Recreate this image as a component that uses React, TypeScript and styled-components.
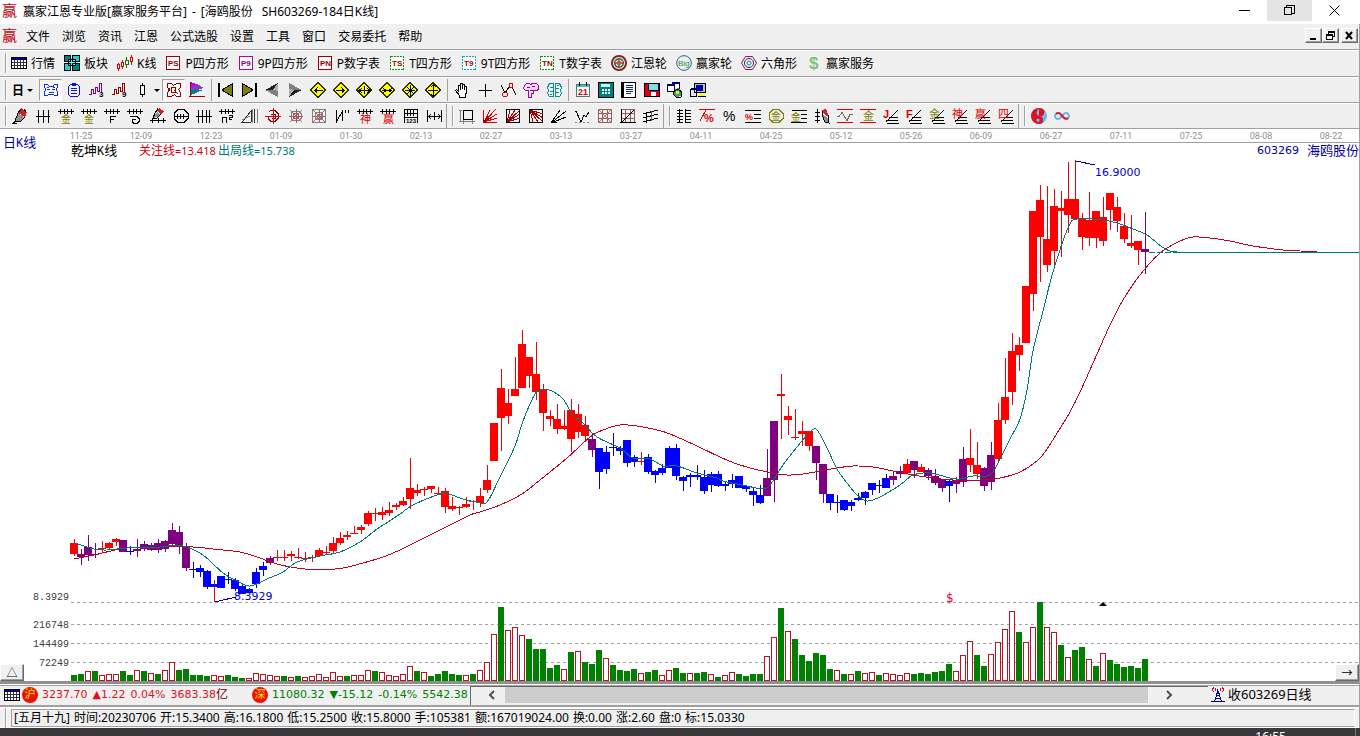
import React from "react";
import styled, { createGlobalStyle, css } from "styled-components";

const UI = `"Noto Sans", "Noto Sans CJK SC", sans-serif`;
const NUM = `"DejaVu Sans", "Noto Sans CJK SC", sans-serif`;

const Global = createGlobalStyle`
  * { box-sizing: border-box; }
  body { margin: 0; background: #3b383b; font-family: ${UI}; font-size: 12px; color: #000; overflow: hidden; }
  button { font: inherit; color: inherit; }
`;

/* ---------- frame ---------- */
const Shell = styled.div`
  display: flex;
  flex-direction: column;
  min-height: 100vh;
  background: #fff;
`;
const TitleBar = styled.header`
  display: flex;
  align-items: center;
  height: 24px;
  padding: 0 0 2px 2px;
  gap: 5px;
  background: #fff;
`;
const Title = styled.h1`
  display: flex;
  align-items: center;
  gap: 5px;
  margin: 0;
  flex: 1;
  font-size: 12px;
  font-weight: 400;
  white-space: nowrap;
`;
const Code = styled.span`
  margin-left: 4px;
`;
const WindowButtons = styled.div`
  display: flex;
  align-self: flex-start;
  margin-right: 3px;
`;
const WindowButton = styled.button<{ $hot?: boolean }>`
  width: 45px;
  height: 21px;
  padding: 0;
  border: 0;
  display: grid;
  place-items: center;
  background: ${(p) => (p.$hot ? "#e5e5e5" : "transparent")};
`;
const Body = styled.div`
  display: flex;
  flex-direction: column;
  flex: 1;
  border-right: 1px solid #a0a0a0;
`;
const MenuBar = styled.nav`
  display: flex;
  align-items: center;
  height: 26px;
  padding: 0 1px 2px 2px;
  background: #f0f0f0;
  border-bottom: 1px solid #a0a0a0;
`;
const MenuItem = styled.button`
  border: 0;
  padding: 0;
  margin-left: 12px;
  background: none;
  white-space: nowrap;
  &:first-of-type { margin-left: 8px; }
`;
const ChildButtons = styled.div`
  display: flex;
  margin-left: auto;
`;
const Raised = css`
  background: #f0f0f0;
  border: 1px solid;
  border-color: #fff #696969 #696969 #fff;
  box-shadow: inset -1px -1px 0 #a0a0a0;
  padding: 0;
  display: grid;
  place-items: center;
`;
const ChildButton = styled.button<{ $apart?: boolean }>`
  ${Raised}
  width: 17px;
  height: 15px;
  margin-left: ${(p) => (p.$apart ? "2px" : "0")};
`;

/* ---------- tool bars ---------- */
const ToolRow = styled.div<{ $tall?: boolean }>`
  display: flex;
  height: ${(p) => (p.$tall ? "27px" : "26px")};
  padding-bottom: ${(p) => (p.$tall ? "2px" : "0")};
  background: #f0f0f0;
  border-top: 1px solid #fff;
  border-bottom: 1px solid #a0a0a0;
`;
const Band = styled.div<{ $closed?: boolean }>`
  display: flex;
  align-items: center;
  padding: 0 1px 0 5px;
  border-right: ${(p) => (p.$closed ? "1px solid #a0a0a0" : "0")};
`;
const Grip = styled.span`
  width: 2px;
  height: 20px;
  margin-right: 1px;
  background: #fff;
  border-left: 1px solid #a0a0a0;
`;
const Labelled = styled.button`
  display: flex;
  align-items: center;
  gap: 4px;
  border: 0;
  padding: 0;
  margin: 0 6px 0 3px;
  background: none;
  white-space: nowrap;
`;
const Tool = styled.button<{ $pressed?: boolean; $menu?: boolean }>`
  display: flex;
  align-items: center;
  gap: 6px;
  width: ${(p) => (p.$menu ? "31px" : "23px")};
  height: 22px;
  padding: 0 0 0 3px;
  font-weight: 700;
  border: 1px solid;
  border-color: ${(p) => (p.$pressed ? "#a0a0a0 #fff #fff #a0a0a0" : "transparent")};
  background: ${(p) => (p.$pressed ? "#f8f8f8" : "none")};
`;
const Caret = styled.span`
  border: 3px solid transparent;
  border-top-color: #000;
  border-bottom: 0;
  margin-left: -3px;
`;
const Divider = styled.span`
  width: 1px;
  height: 22px;
  margin: 0 2px 0 3px;
  background: #a0a0a0;
`;
const IconSvg = styled.svg`
  flex: none;
  overflow: visible;
`;

/* ---------- chart ---------- */
const ChartPane = styled.main`
  position: relative;
  flex: 1;
  min-height: 552px;
  background: #fff;
`;
const ChartSvg = styled.svg`
  display: block;
  width: 100%;
  height: 552px;
`;
const CornerButton = styled.button<{ $right?: boolean }>`
  ${Raised}
  position: absolute;
  bottom: 0;
  ${(p) => (p.$right ? "right: 0;" : "left: 0;")}
  width: 24px;
  height: 17px;
  font-size: 11px;
  line-height: 12px;
`;
const StockName = styled.div`
  position: absolute;
  top: 14px;
  right: 0;
  display: flex;
  gap: 8px;
  align-items: center;
  color: #0000a0;
  font-family: ${NUM};
  font-size: 11px;
  line-height: 16px;
`;
const NameText = styled.span`
  font-size: 13px;
`;

/* ---------- bottom bars ---------- */
const QuoteBar = styled.section`
  display: flex;
  align-items: center;
  height: 26px;
  background: #f0f0f0;
  border-top: 3px solid #909090;
  border-bottom: 2px solid #a0a0a0;
  box-shadow: inset 0 1px 0 #fff, inset 0 2px 0 #a0a0a0;
  font-family: ${NUM};
  font-size: 11px;
`;
const Quotes = styled.div`
  display: flex;
  align-items: center;
  flex: 0 1 470px;
  min-width: 0;
  padding-left: 4px;
  gap: 2px;
  overflow: hidden;
  white-space: nowrap;
`;
const Quote = styled.span<{ $up?: boolean }>`
  display: flex;
  align-items: center;
  gap: 5px;
  flex: none;
  margin-right: ${(p) => (p.$up ? "22px" : "0")};
  color: ${(p) => (p.$up ? "#e01020" : "#008000")};
`;
const Exchange = styled.b`
  display: grid;
  place-items: center;
  width: 16px;
  height: 16px;
  margin-right: -1px;
  border-radius: 8px;
  background: #f01000;
  color: #ffe000;
  font-size: 11px;
  font-weight: 400;
  line-height: 16px;
`;
const Turnover = styled.span`
  display: flex;
  align-items: center;
`;
const Unit = styled.span`
  color: #600000;
  font-size: 12px;
  line-height: 16px;
`;
const Scroller = styled.div`
  display: flex;
  flex: 1;
  align-self: stretch;
  margin-top: 2px;
  border-top: 1px solid #696969;
  border-left: 1px solid #696969;
`;
const ScrollButton = styled.button<{ $wide?: boolean }>`
  width: ${(p) => (p.$wide ? "60px" : "34px")};
  padding: 0 ${(p) => (p.$wide ? "26px" : "0")} 2px 8px;
  border: 0;
  background: #f0f0f0;
  display: grid;
  place-items: center;
`;
const Thumb = styled.div`
  flex: 1;
  margin-bottom: 2px;
  background: #cdcdcd;
`;
const Receiver = styled.div`
  display: flex;
  align-items: center;
  gap: 2px;
  width: 151px;
  padding: 0 0 1px 2px;
  font-family: ${UI};
  font-size: 13px;
  line-height: 16px;
`;
const InfoBar = styled.footer`
  display: flex;
  align-items: center;
  height: 21px;
  padding-left: 5px;
  gap: 3px;
  background: #f0f0f0;
  border-top: 2px solid #fff;
  border-bottom: 1px solid #fff;
`;
const InfoText = styled.div`
  display: flex;
  gap: 4px;
  margin: 0 4px 0 0;
  flex: 1;
  padding-left: 2px;
  border: 1px solid #a0a0a0;
  border-right-color: #fff;
  line-height: 16px;
  white-space: nowrap;
`;
const TaskBar = styled.div`
  display: flex;
  justify-content: flex-end;
  height: 8px;
  padding-right: 4px;
  background: #3b383b;
  color: #fff;
  overflow: hidden;
`;
const Clock = styled.span`
  padding: 1px 69px 0 0;
  border-right: 1px solid #777;
  line-height: 16px;
`;

/* ---------- icons ---------- */
type Layer = [string, string];
type Glyph = [string, number, number, string, number, string?];
type IconDef = { f?: Layer[]; s?: Layer[]; t?: Glyph; dash?: string; smooth?: boolean; w?: number };

const K = "#000";
const R = "#e00000";
const D = "#a00000";
const G = "#808000";
const comb = "M0 3.5h16M2.5 1v5M6.5 1v5M9.5 1v5M13.5 1v5";
const diamond = "M8 0L16 8L8 16L0 8z";
const fan = "M4 15.5h12M3 12.5h12M6 9.5h9M3 14L15 2";
const box = "M1.5 1.5h13v13h-13z";
const grid = "M1.5 1.5h13v13h-13zM1 5.5h14M1 10.5h14M5.5 1v14M10.5 1v14";

const boxed = (text: string, edge: string, ink: string, dash?: string): IconDef => ({
  f: [["#fff", box]],
  s: [[edge, box]],
  t: [text, 3, 11, ink, 8, "700"],
  dash,
});
const sign = (arrows: string): IconDef => ({ f: [["#ff0", diamond]], s: [["#303000", "M8 .5L15.5 8L8 15.5L.5 8z"], [K, arrows]] });
const right = (c: string, text: string): IconDef => ({ s: [[K, fan]], t: [text, 0, 10, c, 11, text < "a" ? "700" : "400"] });

const icons: Record<string, IconDef> = {
  win: { t: ["赢", 0, 13, "#c00010", 15] },
  table: {
    f: [["#fff", "M0 2h16v12H0z"], ["#000080", "M0 2h16v3H0z"]],
    s: [["#303040", "M3.5 5v9M6.5 5v9M9.5 5v9M12.5 5v9M0 7.5h16M0 10.5h16"], [K, "M.5 2.5h15v11h-15z"]],
  },
  blocks: {
    f: [["#008080", "M1 1h6v6H1zM9 9h6v6H9z"], ["#20d0d0", "M9 1h6v6H9zM1 9h6v6H1z"], ["#40ffff", "M5 4h6v6H5z"]],
    s: [[K, "M.5 .5h6v6h-6zM8.5 .5h7v6h-7zM.5 8.5h6v7h-6zM8.5 8.5h7v7h-7zM4.5 4.5h7v6h-7z"]],
  },
  kline: {
    f: [["#fff", "M1 9h1v5H1zM5 7h1v4H5zM9 5h2v5H9zM13 3h2v4h-2z"]],
    s: [[R, "M.5 9.5h2v4h-2zM1.5 8v1M1.500 14v2M4.5 7.5h2v4h-2zM5.5 5v2M5.500 12v2M13.5 2.5h2v4h-2zM14.5 0v2M14.500 7v3"], ["#008000", "M8.5 5.5h3v4h-3zM9.5 2v3M9.500 10v3"]],
  },
  ps: boxed("PS", D, D),
  p9: boxed("P9", "#b000b0", "#800080"),
  pn: boxed("PN", D, D),
  ts: boxed("TS", "#00a000", D, "2 1"),
  t9: boxed("T9", "#00b0b0", D, "2 1"),
  tn: boxed("TN", "#00a000", D, "2 1"),
  wheel: {
    smooth: true,
    f: [["#802828", "M8 0a8 8 0 1 0 .01 0z"], ["#f0f0f0", "M8 2a6 6 0 1 0 .01 0z"], ["#207040", "M8 3a5 5 0 1 0 .01 0z"], ["#fff", "M8 4.500a3.500 3.500 0 1 0 .01 0z"]],
    s: [["#b02020", "M8 6a2 2 0 1 0 .01 0zM8 3v10M3 8h10"]],
  },
  big: { smooth: true, s: [["#206090", "M8 .7a7.3 7.3 0 1 0 .01 0z"]], t: ["Big", 2, 11, "#209040", 8, "400"] },
  hex: {
    smooth: true,
    s: [["#a01040", "M4.5 1.5h7L15.5 8l-4 6.5h-7L.5 8z"], ["#2020b0", "M8 3.5a4.5 4.5 0 1 0 .01 0z"], ["#208050", "M8 6a2 2 0 1 0 .01 0z"]],
  },
  dollar: { t: ["$", 3, 14, "#80c080", 17, "700"] },
  mask: { s: [["#1030e0", "M1 2.500h4M11 2.500h4M5.500 3v1M10.500 3v1M6 4.500h5M1.500 3v3M14.500 3v3M2.500 6v3M13.500 6v3M1.500 9v5M14.500 9v5M2 13.500h3M11 13.500h3M5 12.500h6M4 7.500h3M9 7.500h3M5.500 10.500h5M4 5.500h2M10 5.500h2"]] },
  list: { s: [["#1010d0", "M4.5 2.5h7l2 2v8l-2 2h-7l-2-2v-8zM6.5 1.5h3v2h-3zM5 6.5h6M5 8.5h6M5 11.5h6"]] },
  wave3: { s: [["#800080", "M0 12.500h2.500v-5h2v4h2v-6h2v4h2v-8h2v8"]], t: ["3", 10, 15, K, 8, "700"] },
  wave9: { s: [["#900000", "M0 12.500h2.500v-5h2v4h2v-6h2v4h2v-8h2v8"]], t: ["9", 10, 15, K, 8, "700"] },
  candle: { f: [["#fff", "M5 4h5v9H5z"]], s: [[K, "M5.5 3.5h4v9h-4zM7.5 1v3M7.5 13v2"]] },
  gear: { s: [["#900000", "M1.5 1.5h4l2 2 3-2h4v4l-2 2 2 3v4h-4l-2-2-3 2h-4v-4l2-2-2-3zM5.5 5.5h4v5h-4zM8 8l4 4M4 6l-2 4"]] },
  flag: { f: [["#c000e0", "M2 0l6 2.500-6 3z"], ["#8040c0", "M2 5l6-3 7 4-7 2H2z"], ["#008080", "M2 8h12l-12 5z"]], s: [[D, "M1.5 0v15M0 14.5h16"]] },
  first: { f: [[K, "M0 1h2v14H0z"], [G, "M14 2v12L4 8z"]], s: [[K, "M14.5 1.5v13L4 8z"]] },
  last: { f: [[K, "M14 1h2v14h-2z"], [G, "M2 2v12l10-6z"]], s: [[K, "M1.5 1.5v13L12 8z"]] },
  prev: { f: [["#b0b0b0", "M14 1v14L1 8z"], ["#202020", "M14 1L1 8h8z"], ["#808080", "M14 15V9L9 8H1z"]] },
  next: { f: [["#b0b0b0", "M2 1v14l13-7z"], ["#202020", "M2 15L15 8H7z"], ["#808080", "M2 1v6l5 1h8z"]] },
  left: sign("M4 8.5h9M7.5 5.5L4.5 8.5l3 3M5 7.500h2M5 9.500h2"),
  rightd: sign("M3 8.5h9M8.5 5.5l3 3-3 3M9 7.500h2M9 9.500h2"),
  both: sign("M3 8.5h10M8.5 4v8M6 6l-3 2.5 3 2.5M11 6l3 2.5-3 2.5"),
  inward: sign("M3 8.5h10M4 6l3 2.5-3 2.5M13 6l-3 2.5 3 2.5"),
  star: sign("M3 8.5h10M8.5 3v11M5 5l7 7M12 5l-7 7"),
  updown: sign("M3 8.5h10M8.5 2v12M6 5l2.500-2.500L11 5M6 12l2.500 2.500L11 12"),
  hand: { f: [["#fff", "M5 8V3h2v-2h2v2h2v1h2v7l-2 4H6L2 9z"]], s: [[K, "M4.500 10V3.500h2V8M6.500 7V1.500h2V7M8.500 7V2.500h2V8M10.500 4.500h2v6l-1 2v3H5.500v-2l-4-5 1-1 2 2"]] },
  plus: { s: [[K, "M8.500 2v13M2 8.500h13"]] },
  zig: { s: [[K, "M1 3l4 8 4-6M12 5l4 8"], [R, "M3.500 10.500h3l1 1v2l-1 1h-3l-1-1v-2zM9.500 1.500h3v4h-3z"]] },
  mind: { f: [["#f0d8f0", "M2 3h12v4l-3 2H7v-1H4z"]], s: [["#a000a0", "M1.500 3.500l2-2h3l1 1 2-1h4l2 2v4l-2 1h-3v3h-2v4h-3v-7h-3l-2-2zM4 5.500h3M9 4.500h3M7 8.500h4"]] },
  brain: { s: [["#009090", "M3.500 1.500h4v13h-4l-2-3 1-3-1-3zM9.500 1.500h4l2 4-1 3 1 3-2 3h-4zM4 5.500h3M4 9.500h3M10 6.500h3M10 10.500h3M4 12.500h2M11 3.500h2"]] },
  calendar: { f: [["#fff", "M1 4h13v11H1z"], ["#40c0c0", "M1 2h13v3H1z"]], s: [["#408080", "M1.500 2.500h13v12h-13z"], [K, "M4.500 0v4M11.500 0v4"]], t: ["21", 3, 13, R, 9, "700"] },
  calc: { f: [["#008080", "M1 1h14v15H1z"], ["#c0ffff", "M3 2h9v3H3z"], ["#fff", "M4 7h2v2H4zM7 7h2v2H7zM10 7h2v2h-2zM4 10h2v2H4zM7 10h2v2H7zM10 10h2v2h-2z"]], s: [[K, "M.500 .500h15v15H.500z"]] },
  notes: { f: [["#fff", "M2 1h12v14H2z"], ["#000", "M0 1h3v15H0z"]], s: [[K, "M.500 .500h14v15H.500z"], ["#1020c0", "M5 3.500h7M5 5.500h7M5 7.500h7M5 9.500h7M5 11.500h5"]] },
  disk: { f: [["#000080", "M4 1h12v14H4z"], [R, "M0 1h4v13H0zM4 9h11v5H4z"], ["#80e0e0", "M5 2h9v6H5z"], ["#fff", "M7 10h5v4H7z"]], s: [[K, "M.500 1.500h15v13H.500z"]] },
  globe: { f: [["#fff", "M0 3h8v6H0zM5 1h8v5H5z"], ["#000080", "M0 2h8v2H0zM5 0h8v2H5z"], ["#40a060", "M7 8l4-2 4 3-1 5-5 1-3-3z"], ["#e0e040", "M9 9h3v3H9z"]], s: [["#000060", "M.500 3.500h7v6h-7zM5.500 1.500h7v5"], [K, "M7 9l4-2 4 3-1 5-5 0-3-3z"]] },
  pc: { f: [["#c0c0c0", "M4 1h11v10H4z"], ["#0000a0", "M6 3h7v6H6zM1 6h5v2H1z"], ["#e0e0ff", "M1 8h5v6H1z"], ["#ff0", "M9 12h6v2H9z"]], s: [[K, "M4.500 1.500h11v9h-11zM8 14.500h8M0.500 7.500h6v7h-6z"]] },
  pen: { f: [["#d02020", "M9 0l6 4-2 5-7-4z"], ["#909090", "M6 5l6 4-4 4-5 1z"]], s: [[K, "M9 1L6 5l-3 8 6 0 4-4M0 15.500h5M4 13l-3 2M12 1l2 3"]] },
  hash: { s: [[K, "M1 8.500h14M3.500 2v13M8.500 2v13M13.500 2v13"]] },
  gold1: { s: [[K, comb]], t: ["金", 3, 15, G, 10] },
  fib: { s: [[K, comb], [K, "M6.500 15V8.500H12M6 11.500h4"]] },
  spiral: { s: [[K, comb], [K, "M3 8.500h7l2 2v3l-2 2H7l-2-2v-2h4"]] },
  penrule: { f: [["#d02020", "M9 0l5 3-3 3-4-3z"], ["#909090", "M7 4l4 3-4 2-4 1z"]], s: [[K, "M8 .500L5 5l-2 5h4l4-4M0 12.500h16M2.500 10v5M8.500 10v5M13.500 10v5"]] },
  circlehash: { s: [[K, "M5 1.500h6l4 4v5l-4 4H5l-4-4v-5zM1 8.500h14M4.500 6v5M7.500 6v5M10.500 6v5"]] },
  hash4: { s: [[K, "M0 8.500h16M2.500 2v13M6.500 2v13M10.500 2v13M13.500 2v13"]] },
  n2: { s: [[K, comb], [K, "M3.500 15V9.500h4V15M10 7.500h3v2h-3v2h3"]] },
  mirror: { s: [["#303030", "M0 14.500L9 3v11zM12.500 1v14"], ["#808080", "M10.500 1v14M15.500 1v14M0 12L8 8"]] },
  target: { s: [["#900000", "M4 3.500L6 2.500h4l3 3v5l-3 3H6l-3-3V8M6 6.500h4v4h-3"], [R, "M0 8.500h16M8.500 0v16"]] },
  web: { s: [["#808080", "M2 2l12 12M14 2L2 14M5 3.500h6l2 2v5l-2 2H5l-2-2v-5z"], ["#b05050", "M5.500 5.500h5v5h-5zM8.500 1v14M1 8.500h14"]] },
  webbox: { s: [["#808080", "M1.500 1.500h13v13h-13zM4.500 4.500h7v7h-7zM2 2l12 12M14 2L2 14"], ["#b06060", "M8.500 1v14M1 8.500h14M6.500 6.500h4v4h-4z"]] },
  nn: { s: [[K, "M2.500 2v13M3 13L8 4M8.500 2v11M11.500 2v3M14.500 2v3"]] },
  god1: { s: [[K, comb]], t: ["神", 3, 15, R, 11] },
  win1: { s: [[K, comb]], t: ["赢", 3, 15, R, 11] },
  ruler: { s: [[K, "M1.500 1.500h13M1.500 1v14M14.500 1v14M1 5.500h14M4.500 2v6M7.500 2v6M10.500 2v6M1 9.500h13"]], t: ["123", 3, 15, K, 6, "700"] },
  span: { s: [[K, "M1.500 2v12M15.500 2v12M8.500 4v8M2 8.500h13M5 6L2.500 8.500 5 11M12 6l2.500 2.500L12 11"]] },
  frame: { s: [["#808080", "M0 2.500h3M1.500 2v11M0 13.500h16M4.500 11v5M13.500 11v5"], [K, "M4.500 2.500h9v9h-9z"]] },
  fanred: { s: [[R, "M1.500 2v12.500H15M2 14L8 2M2 14L14 1M2 14L15 6M2 14L15 10"], [D, "M1.500 10v4.500H6M2 14l4-6M2 14l6-4"]] },
  fanbox: { s: [[K, "M1.500 1.500h13v13h-13z"], [D, "M2 14L5 2M2 14L10 2M2 14L15 2M2 14L15 6M2 14L15 10"]] },
  fanbox2: { s: [[K, "M1.500 1.500h13v13h-13z"], [D, "M2 2L5 14M2 2L10 14M2 2L15 14M2 2L15 10M2 2L15 6"]] },
  fanblack: { s: [[K, "M0 15L9 2M0 15L15 3M0 15L15 9M0 15l6-1"]] },
  zigline: { s: [[K, "M1 3h1l5 11 3-7 2 2 3-5"], ["#808080", "M1 14.500h2M5 14.500h2M9 14.500h2M13 14.500h2"]] },
  gridred: { s: [["#906060", grid], ["#b08080", "M1 1l14 14M15 1L1 15"]] },
  gridblack: { s: [["#906060", grid], [K, "M1.500 1v14M0 14.500h16M2 14L14 2"]] },
  chan: { s: [[K, "M0 6L15 2M0 10L15 6M0 14L15 10M3.500 4v11"], ["#606060", "M8.500 3v10"]] },
  levels: { s: [[K, "M3.500 1v14M9.500 1v14M1 2.500h6M1 5.500h6M1 8.500h6M1 11.500h6M1 14.500h6M9 2.500h6M9 5.500h6M9 8.500h6M9 11.500h6M9 14.500h6"]] },
  pctred: { s: [[R, "M0 1.500h16M1 13L7 2"]], t: ["%", 5, 14, R, 11, "700"] },
  pct: { t: ["%", 1, 13, K, 14, "400"] },
  pctlines: { s: [[K, "M0 2.500h16M9 6.500h7M9 10.500h7M0 14.500h16"]], t: ["%", 0, 12, R, 9, "700"] },
  goldc: { s: [[G, "M5 1.500h6l4 4v5l-4 4H5l-4-4v-5z"]], t: ["金", 3, 12, G, 10] },
  goldl: { s: [[K, "M1 2.500h15M10 6.500h6M10 10.500h6M0 14.500h16"]], t: ["金", 0, 13, G, 10] },
  penv: { f: [["#d02020", "M8 2l4-1 3 8-4-2z"], ["#909090", "M8 6l6 4 1 5-5-2z"]], s: [[K, "M3.500 1v14M1 4.500h5M1 8.500h5M1 12.500h5M8 3v4l3 7 4 1-1-8"]] },
  sine: { s: [[R, "M0 1.500h16M0 14.500h16"], ["#707070", "M0 8.500h2l3-4 3 5 2 3 3-6h3"]] },
  goldr: { s: [[R, "M0 1.500h16M0 14.500h16"]], t: ["金", 3, 12, G, 11] },
  rj: right(R, "J"),
  rf: right(R, "F"),
  rg: right(G, "金"),
  rs: right(R, "神"),
  rw: right(R, "赢"),
  r4: right(R, "四"),
  taiji: {
    smooth: true,
    f: [["#70b8f0", "M8 0a8 8 0 1 0 .01 0z"], ["#e01020", "M8 0A8 8 0 0 0 8 16A4 4 0 0 0 8 8A4 4 0 0 1 11 .6z"], ["#e01020", "M8 0a4 4 0 0 1 3 .6A4 4 0 0 1 8 8z"], ["#70b8f0", "M7 10.500a1.700 1.700 0 1 0 .01 0z"], ["#e01020", "M11 3a1.700 1.700 0 1 0 .01 0z"]],
  },
  infinity: {
    smooth: true,
    w: 2,
    s: [["#70b0e8", "M4 5a3 3 0 1 0 .01 0zM12 5a3 3 0 1 0 .01 0z"], ["#d02030", "M2 6c4-3 6 2 7 3s3 3 5 1"]],
  },
  tower: { s: [["#e00020", "M3.500 1v1l-1 1v1l1 2M12.500 1v1l1 1v1l-1 2M5.500 2v3M10.500 2v3"], ["#0000a0", "M7.500 3v5M8.500 5v3M6.500 7v3l-2 5M9.500 7v3l2 5M6 9.500h4M5 12.500h6M1 15.500h14"]] },
};

function Icon({ name }: { name: string }) {
  const d = icons[name];
  return (
    <IconSvg width="16" height="16" viewBox="0 0 16 16" fill="none" shapeRendering={d.smooth ? "auto" : "crispEdges"} aria-hidden="true">
      {d.f?.map(([c, p], i) => <path key={i} fill={c} d={p} />)}
      {d.s?.map(([c, p], i) => <path key={i} stroke={c} strokeWidth={d.w || 1} d={p} strokeDasharray={d.dash} />)}
      {d.t && (
        <text x={d.t[1]} y={d.t[2]} fill={d.t[3]} fontSize={d.t[4]} fontWeight={d.t[5] || "400"} fontFamily={`"Liberation Sans", "Noto Sans CJK SC", sans-serif`}>
          {d.t[0]}
        </text>
      )}
    </IconSvg>
  );
}

/* ---------- content ---------- */
const menus = ["文件", "浏览", "资讯", "江恩", "公式选股", "设置", "工具", "窗口", "交易委托", "帮助"];
const views: [string, string][] = [
  ["table", "行情"], ["blocks", "板块"], ["kline", "K线"], ["ps", "P四方形"], ["p9", "9P四方形"], ["pn", "P数字表"], ["ts", "T四方形"],
  ["t9", "9T四方形"], ["tn", "T数字表"], ["wheel", "江恩轮"], ["big", "赢家轮"], ["hex", "六角形"], ["dollar", "赢家服务"],
];
const navTools = [
  ["first", "last", "prev", "next", "left", "rightd", "both", "inward", "star", "updown"],
  ["hand", "plus", "zig", "mind", "brain"],
  ["calendar", "calc", "notes", "disk", "globe", "pc"],
];
const drawTools = [
  ["pen", "hash", "gold1", "gold1", "fib", "spiral", "penrule", "circlehash", "hash4", "n2", "mirror", "target", "web", "webbox", "nn", "god1", "win1", "ruler", "span"],
  ["frame", "fanred", "fanbox", "fanbox2", "fanblack", "zigline", "gridred", "gridblack", "chan"],
  ["levels", "pctred", "pct", "pctlines", "goldc", "goldl", "penv", "sine", "goldr", "rj", "rf", "rg", "rs", "rw", "r4"],
  ["taiji", "infinity"],
];
const info = ["[五月十九]", "时间:20230706", "开:15.3400", "高:16.1800", "低:15.2500", "收:15.8000", "手:105381", "额:167019024.00", "换:0.00", "涨:2.60", "盘:0", "标:15.0330"];

/* colour, high, body top, body bottom, low — one entry per trading day */
const candles = `R539,543,554,556 P549,554,557,565 P535,547,555,561 P543,554,555,558 R541,548,549,552 R542,543,548,550 R538,539,542,546 P540,540,552,552
B546,551,552,555 P539,549,551,557 P541,544,549,551 P543,545,550,551 P539,543,550,553 P540,541,549,552 P523,530,544,546 P526,532,546,554
P543,547,568,571 B562,569,570,578 B565,568,572,577 B570,571,587,589 B580,584,587,602 B576,576,588,588 B572,579,580,584 B578,580,589,591
B584,586,594,594 B588,589,593,593 B568,572,584,588 B562,566,570,576 P556,558,563,565 R550,557,558,561 R550,557,558,561 R551,554,556,561
R548,557,558,559 R552,558,559,562 R555,557,558,562 R548,550,556,557 R546,552,553,555 R537,543,551,554 R532,538,543,545 R531,535,537,540
R526,533,534,534 R525,527,530,534 R511,513,524,526 R508,513,514,521 R507,512,515,520 R502,510,513,516 R503,505,507,510 R497,501,505,506
R458,488,499,509 R484,490,493,496 R487,489,490,496 R486,486,489,493 R487,493,494,495 R488,491,507,513 R497,506,509,511 R506,507,508,515
R497,504,507,508 R500,501,502,510 R488,496,503,507 R465,480,490,493 R423,423,461,461 R369,388,418,451 R389,403,416,424 R357,389,396,396
R330,344,388,388 R357,357,376,388 R342,374,392,400 R384,389,413,431 R410,416,419,426 R404,419,429,434 R410,426,429,430 R399,410,439,452
R404,414,432,438 R416,425,436,440 P433,439,450,457 B448,448,472,489 B446,452,469,474 B433,447,448,456 B446,448,451,455 B440,440,463,467
B455,457,462,467 R452,461,462,465 B454,457,472,474 B470,471,475,483 B464,468,473,475 B446,448,468,468 B444,448,476,480 B476,477,481,491
B473,475,477,487 B465,475,477,480 B470,477,491,494 B472,474,485,492 B471,474,486,487 B482,484,486,491 B474,480,484,488 B476,476,488,488
B485,486,489,492 B488,491,495,506 B485,495,503,504 P449,478,496,496 P421,421,480,502 R374,394,396,439 R406,416,420,435 R409,437,438,440
R421,431,434,446 R431,431,446,451 P446,446,463,480 P464,464,494,503 B494,494,503,510 B495,502,503,513 B500,500,510,511 B500,502,506,511
B493,498,500,501 B491,492,498,505 B483,483,490,495 B480,485,486,493 B474,478,488,488 P472,476,480,485 P466,471,474,478 R459,464,473,473
P461,461,470,478 R464,467,472,472 P468,470,476,480 P469,476,483,485 P479,479,488,492 B480,481,486,502 P477,480,484,493 P447,459,482,487
R429,458,465,472 R442,465,474,479 P467,468,486,491 P442,455,482,490 R403,420,459,461 R358,397,420,424 R333,351,392,405 R337,345,355,371
R286,286,343,343 R211,211,294,311 R185,200,237,282 R186,239,265,272 R189,206,251,268 R191,208,211,257 R162,199,215,233 R160,199,219,219
R213,219,237,250 R192,220,238,246 R211,211,238,248 R197,217,241,246 R193,193,210,230 R197,207,221,232 R213,226,239,243 R215,243,246,248
R241,241,250,265 P212,249,252,274`
  .split(/\s+/)
  .map((s) => ({ tone: s[0], v: s.slice(1).split(",").map(Number) }));

/* g = filled down-day bar, r = hollow up-day bar, followed by its height */
const volumes = `g6 g7 r10 g10 r6 r7 r7 g10 g6 r11 g10 r8 g7 r11 r19 g11 g12 g6 g6 g5 r6 r5 g6 g4 g3 r3 r8 r7 r6 r5 g5 r4 g5 r4 r5 r7 r4 r9 r5 g5
r6 r6 r11 g10 r9 r6 r5 r7 r15 g10 r9 g5 g7 g10 g7 g6 r6 g7 r11 r19 r47 g74 r51 r54 r46 g42 g32 g32 g13 g16 r12 g29 r30 g19 g17 g31 r23 g16 g11 g10
g12 r8 g9 g11 r6 r11 g13 g8 r8 g8 g9 r7 g4 r6 r9 g7 g5 g7 g7 r25 r44 g73 r50 g42 g26 g20 g28 g26 g12 r11 g7 r7 g10 r8 r9 g6 r8 r7 r6 r8
g7 g8 g7 g9 g10 g17 r10 r26 r40 g26 g15 r27 r39 r52 r70 g49 r39 r54 g79 r54 r49 g36 r24 g31 g34 r22 g15 r28 g21 g17 g14 g15 g13 g22`
  .split(/\s+/)
  .map((s) => ({ up: s[0] === "r", h: Number(s.slice(1)) }));

const slowLine = "74,559 94,555 115,550 127,548 160,547 193,547 213,549 240,552 257,557 277,564 297,568 320,570 343,568 363,563 383,557 400,550 410,545 430,535 450,525 470,515 480,512 500,505 522,494 540,480 567,458 590,437 603,430 620,425 637,426 657,430 670,434 697,446 720,457 740,465 767,472 787,475 803,474 820,471 837,468 853,466 873,467 893,471 913,475 933,478 953,480 980,480 1000,478 1020,472 1037,461 1047,449 1059,430 1070,412 1081,390 1097,354 1110,325 1123,300 1140,275 1160,253 1180,241 1193,237 1210,238 1230,241 1253,246 1283,250 1300,251 1317,251";
const fastLine = "75,543 94,549 107,550 127,548 160,547 175,545 187,547 203,555 223,573 237,581 250,586 267,579 283,572 297,562 320,556 340,552 360,542 377,529 388,522 400,514 413,505 437,495 448,494 463,499 477,502 487,502 500,477 515,446 523,421 535,394 542,390 552,391 563,399 573,415 583,423 597,437 620,448 633,458 650,459 663,466 677,466 697,473 717,478 723,481 747,486 763,489 770,485 783,465 797,447 810,432 817,430 827,448 837,469 847,483 857,495 867,501 880,497 900,485 913,475 930,473 950,478 960,479 973,476 990,475 1000,459 1010,439 1020,419 1027,390 1033,351 1043,311 1053,272 1068,228 1077,219 1103,220 1113,222 1120,224 1133,229 1147,235 1162,247 1170,251 1177,252";

/* Catmull-Rom curve through the listed points */
function curve(src: string) {
  const p = src.split(" ").map((s) => s.split(",").map(Number));
  let d = `M${p[0]}`;
  for (let i = 0; i < p.length - 1; i++) {
    const a = p[i - 1] || p[i], b = p[i], c = p[i + 1], e = p[i + 2] || c;
    d += `C${b[0] + (c[0] - a[0]) / 6} ${b[1] + (c[1] - a[1]) / 6} ${c[0] - (e[0] - b[0]) / 6} ${c[1] - (e[1] - b[1]) / 6} ${c[0]} ${c[1]}`;
  }
  return d;
}

const tones: Record<string, [string, string]> = { R: ["#ff0000", "#f00008"], P: ["#800080", "#780080"], B: ["#0000ff", "#0000c0"] };
const PANE_TOP = 129;
const VOLUME_BASE = 681;
const STEP = 7;
const dates = ["12-09", "12-23", "01-09", "01-30", "02-13", "02-27", "03-13", "03-27", "04-11", "04-25", "05-12", "05-26", "06-09", "06-27", "07-11", "07-25", "08-08", "08-22"];
const levels: [number, string][] = [[602, "8.3929"], [624, "216748"], [643, "144499"], [662, "72249"]];

function Chart() {
  return (
    <ChartSvg role="img" aria-label="海鸥股份 日K线">
      <g transform={`translate(0 ${-PANE_TOP})`}>
        <g fontFamily="Roboto, sans-serif" fontSize="9" fill="#909090" textAnchor="middle">
          <text x="81" y="139">11-25</text>
          {dates.map((d, i) => <text key={d} x={141 + i * 70} y="139">{d}</text>)}
        </g>
        <g shapeRendering="crispEdges" stroke="#a0a0a0">
          <line x1="71" x2="100%" y1="142.5" y2="142.5" />
          {levels.map(([y]) => <line key={y} x1="71" x2="100%" y1={y + 0.5} y2={y + 0.5} strokeDasharray="3 3" />)}
        </g>
        <g fontFamily={`"Liberation Mono", monospace`} fontSize="10" fill="#404040" textAnchor="end">
          {levels.map(([y, t]) => <text key={t} x="69" y={y === 602 ? 600 : y + 4}>{t}</text>)}
        </g>

        <g shapeRendering="crispEdges">
          {candles.map(({ tone, v }, i) => (
            <g key={i}>
              <rect x={74 + i * STEP} y={v[0]} width="1" height={v[3] - v[0]} fill={i === 20 ? "#f00008" : tones[tone][1]} />
              <rect x={70 + i * STEP} y={v[1]} width="8" height={v[2] - v[1]} fill={tones[tone][0]} />
            </g>
          ))}
          {volumes.map(({ up, h }, i) =>
            up ? (
              <rect key={i} x={71.5 + i * STEP} y={VOLUME_BASE - h + 0.5} width="5" height={h - 1} fill="#fff" stroke="#c01020" />
            ) : (
              <rect key={i} x={71 + i * STEP} y={VOLUME_BASE - h} width="6" height={h} fill="#008000" />
            )
          )}
          <path d={curve(slowLine)} fill="none" stroke="#c00020" />
          <path d={curve(fastLine)} fill="none" stroke="#007878" />
          <line x1="1177" x2="100%" y1="252.5" y2="252.5" stroke="#007878" />
          <path d="M215 602l21-5M1076 161l19 4" stroke="#0000a0" />
          <path d="M1149 252.5h28" stroke="#007878" strokeDasharray="6 2" />
        </g>
        <path d="M1099 606l4-4 4 4z" fill="#000" />

        <g fontFamily={NUM} fontSize="11" fill="#0000d0">
          <text x="234" y="600">8.3929</text>
          <text x="1095" y="176">16.9000</text>
          <text x="946" y="602" fontSize="12" fill="#e00030">$</text>
        </g>
        <g fontFamily={`"Liberation Mono", "Noto Sans CJK SC", sans-serif`} fontSize="13">
          <text x="3" y="147" fill="#0000a0">日<tspan fontSize="12">K</tspan>线</text>
          <text x="71" y="155">乾坤<tspan fontSize="12">K</tspan>线</text>
        </g>
        <g fontFamily={UI} fontSize="12">
          <text x="139" y="155" fill="#d00010">关注线<tspan fontSize="11">=13.418</tspan></text>
          <text x="218" y="155" fill="#007878">出局线<tspan fontSize="11">=15.738</tspan></text>
        </g>
      </g>
    </ChartSvg>
  );
}

function ToolGroup({ names }: { names: string[] }) {
  return <>{names.map((n, i) => <Tool key={i} aria-label={n}><Icon name={n} /></Tool>)}</>;
}

export default function App() {
  return (
    <Shell>
      <Global />
      <TitleBar>
        <Icon name="win" />
        <Title>
          <span>赢家江恩专业版[赢家服务平台]</span>
          <span>-</span>
          <span>[海鸥股份</span>
          <Code>SH603269-184日K线]</Code>
        </Title>
        <WindowButtons>
          <WindowButton aria-label="最小化"><svg width="11" height="11"><path d="M0 5.5h11" stroke="#000" /></svg></WindowButton>
          <WindowButton $hot aria-label="还原"><svg width="11" height="11" fill="none" stroke="#000" shapeRendering="crispEdges"><path d="M.5 2.5h7v7h-7zM2.500 2V.5h8v8H8" /></svg></WindowButton>
          <WindowButton aria-label="关闭"><svg width="11" height="11"><path d="M.5 .5l10 10M10.500 .5l-10 10" stroke="#000" /></svg></WindowButton>
        </WindowButtons>
      </TitleBar>
      <Body>
        <MenuBar>
          <Icon name="win" />
          {menus.map((m) => <MenuItem key={m}>{m}</MenuItem>)}
          <ChildButtons>
            <ChildButton aria-label="最小化窗口"><svg width="11" height="10"><path d="M2 7h6v2H2z" /></svg></ChildButton>
            <ChildButton aria-label="还原窗口"><svg width="11" height="10" fill="none" stroke="#000" shapeRendering="crispEdges"><path d="M3.500 3V.5h6v5H7M3 1.500h7M1.500 3.500h6v5h-6zM1 4.500h7" /></svg></ChildButton>
            <ChildButton $apart aria-label="关闭窗口"><svg width="11" height="10"><path d="M2 1l6 7M8 1l-6 7" stroke="#000" strokeWidth="2" /></svg></ChildButton>
          </ChildButtons>
        </MenuBar>
        <ToolRow $tall>
          <Band>
            <Grip />
            {views.map(([icon, label]) => <Labelled key={label}><Icon name={icon} />{label}</Labelled>)}
          </Band>
        </ToolRow>
        <ToolRow>
          <Band>
            <Grip />
            <Tool $menu>日<Caret /></Tool>
            <Tool $pressed aria-label="mask"><Icon name="mask" /></Tool>
            <ToolGroup names={["list", "wave3", "wave9"]} />
            <Tool $menu aria-label="candle"><Icon name="candle" /><Caret /></Tool>
            <Tool $pressed aria-label="gear"><Icon name="gear" /></Tool>
            <ToolGroup names={["flag"]} />
            {navTools.map((names, i) => (
              <React.Fragment key={i}><Divider /><ToolGroup names={names} /></React.Fragment>
            ))}
          </Band>
        </ToolRow>
        <ToolRow>
          {drawTools.map((names, i) => (
            <Band key={i} $closed={i < 3}><Grip /><ToolGroup names={names} /></Band>
          ))}
        </ToolRow>
        <ChartPane>
          <Chart />
          <StockName>603269<NameText>海鸥股份</NameText></StockName>
          <CornerButton aria-label="展开">△</CornerButton>
          <CornerButton $right aria-label="向右">→</CornerButton>
        </ChartPane>
        <QuoteBar>
          <Quotes>
            <Icon name="table" />
            <Quote $up>
              <Exchange>沪</Exchange>
              <span>3237.70</span><span>▲1.22</span><span>0.04%</span>
              <Turnover>3683.38<Unit>亿</Unit></Turnover>
            </Quote>
            <Quote>
              <Exchange>深</Exchange>
              <span>11080.32</span><span>▼-15.12</span><span>-0.14%</span><span>5542.38</span>
            </Quote>
          </Quotes>
          <Scroller>
            <ScrollButton aria-label="向左滚动"><svg width="8" height="10"><path d="M6 1L2 5l4 4" stroke="#505050" strokeWidth="2" fill="none" /></svg></ScrollButton>
            <Thumb />
            <ScrollButton $wide aria-label="向右滚动"><svg width="8" height="10"><path d="M2 1l4 4-4 4" stroke="#505050" strokeWidth="2" fill="none" /></svg></ScrollButton>
          </Scroller>
          <Receiver><Icon name="tower" />收603269日线</Receiver>
        </QuoteBar>
        <InfoBar>
          <Grip />
          <InfoText>{info.map((t) => <span key={t}>{t}</span>)}</InfoText>
        </InfoBar>
      </Body>
      <TaskBar><Clock>16:55</Clock></TaskBar>
    </Shell>
  );
}
